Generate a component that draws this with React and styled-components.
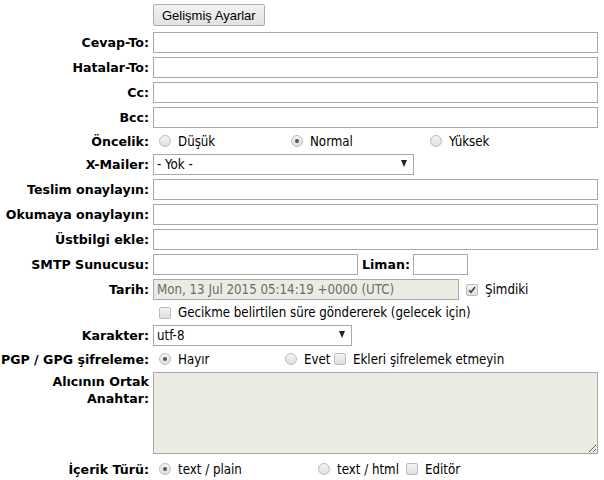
import styled, { createGlobalStyle } from "styled-components"

const Global = createGlobalStyle`
    html, body { margin: 0; padding: 0; background: #fff; }
    body {
        font-family: "DejaVu Sans Condensed", "DejaVu Sans", sans-serif;
        font-size: 13.2px;
        color: #000;
    }
`

const Form = styled.div`
    display: grid;
    grid-template-columns: 149px 445px;
    column-gap: 4px;
    row-gap: 4px;
    align-items: center;
    padding-top: 4px;
`

const Label = styled.div`
    text-align: right;
    font-family: "DejaVu Sans", sans-serif;
    font-size: 12.6px;
    font-weight: bold;
    line-height: 17px;
    white-space: nowrap;
    align-self: ${p => (p.$top ? "start" : "center")};
    padding-top: ${p => (p.$top ? "1px" : "0")};
`

const Cell = styled.div`
    display: flex;
    align-items: center;
    min-height: ${p => p.$h || 18}px;
`

const Button = styled.button`
    font-family: "Liberation Sans", Arial, sans-serif;
    font-size: 13px;
    height: 22px;
    padding: 0 8px;
    border: 1px solid #acacac;
    border-radius: 2px;
    background: linear-gradient(#f2f2f2, #e2e2e2);
    color: #000;
    margin-bottom: 2px;
`

const Text = styled.input`
    box-sizing: border-box;
    height: 21px;
    width: ${p => p.$w || "100%"};
    border: 1px solid #a9a9a9;
    padding: 1px 3px;
    font-family: inherit;
    font-size: 13.2px;
    background: ${p => (p.disabled ? "#ebebe4" : "#fff")};
    color: ${p => (p.disabled ? "#6d6d6d" : "#000")};
    margin: 0;
    outline: none;
`

const SelectBox = styled.div`
    position: relative;
    box-sizing: border-box;
    width: ${p => p.$w}px;
    height: 21px;
    border: 1px solid #a9a9a9;
    display: flex;
    align-items: center;
    padding-left: 3px;
    background: #fff;
`

const Arrow = styled.span`
    position: absolute;
    right: 6px;
    top: 5px;
    width: 0;
    height: 0;
    border-left: 3.5px solid transparent;
    border-right: 3.5px solid transparent;
    border-top: 7px solid #222;
`

const Radio = styled.span`
    box-sizing: border-box;
    display: inline-block;
    flex: none;
    width: 12px;
    height: 12px;
    border-radius: 50%;
    border: 1px solid #bcbcbc;
    background: linear-gradient(#f4f4f4, #dedede);
    margin: 0 7px 0 6px;
    position: relative;
    &::after {
        content: "";
        display: ${p => (p.$on ? "block" : "none")};
        position: absolute;
        left: 3px;
        top: 3px;
        width: 4px;
        height: 4px;
        border-radius: 50%;
        background: #555;
    }
`

const Check = styled.span`
    box-sizing: border-box;
    flex: none;
    width: 12px;
    height: 12px;
    border-radius: 2px;
    border: 1px solid #bcbcbc;
    background: linear-gradient(#f4f4f4, #dedede);
    margin: 0 7px 0 ${p => p.$ml ?? 6}px;
    display: flex;
    align-items: center;
    justify-content: center;
`

const Options = styled.div`
    display: grid;
    grid-template-columns: ${p => p.$cols};
    align-items: center;
    width: 100%;
    min-height: ${p => p.$h || 18}px;
`

const Opt = styled.label`
    display: flex;
    align-items: center;
    white-space: nowrap;
`

const InlineLabel = styled.span`
    font-family: "DejaVu Sans", sans-serif;
    font-size: 12.6px;
    font-weight: bold;
    margin: 0 3px 0 4px;
`

const Area = styled.textarea`
    box-sizing: border-box;
    width: 446px;
    height: 82px;
    border: 1px solid #a9a9a9;
    background: #ebebe4;
    margin: 0;
    display: block;
`

function Tick() {
    return <svg width="8" height="8" viewBox="0 0 8 8">
        <path d="M1 4.2 L3 6.3 L7 1" fill="none" stroke="#444" strokeWidth="1.6" />
    </svg>
}

const textRows = ["Cevap-To:", "Hatalar-To:", "Cc:", "Bcc:"]

function App() {
    return <>
        <Global />
        <Form>
            <div />
            <Cell $h={22}><Button>Gelişmiş Ayarlar</Button></Cell>

            {textRows.map(l => [
                <Label key={l + "l"}>{l}</Label>,
                <Cell key={l + "c"} $h={21}><Text /></Cell>,
            ])}

            <Label>Öncelik:</Label>
            <Options $cols="132px 139px 1fr">
                <Opt><Radio />Düşük</Opt>
                <Opt><Radio $on />Normal</Opt>
                <Opt><Radio />Yüksek</Opt>
            </Options>

            <Label>X-Mailer:</Label>
            <Cell $h={21}><SelectBox $w={261}>- Yok -<Arrow /></SelectBox></Cell>

            <Label>Teslim onaylayın:</Label>
            <Cell $h={21}><Text /></Cell>
            <Label>Okumaya onaylayın:</Label>
            <Cell $h={21}><Text /></Cell>
            <Label>Üstbilgi ekle:</Label>
            <Cell $h={21}><Text /></Cell>

            <Label>SMTP Sunucusu:</Label>
            <Cell $h={21}>
                <Text $w="205px" />
                <InlineLabel>Liman:</InlineLabel>
                <Text $w="55px" />
            </Cell>

            <Label>Tarih:</Label>
            <Cell $h={21}>
                <Text $w="306px" disabled value="Mon, 13 Jul 2015 05:14:19 +0000 (UTC)" readOnly />
                <Check $ml={7}><Tick /></Check>Şimdiki
            </Cell>

            <div />
            <Cell $h={17}><Check />Gecikme belirtilen süre göndererek (gelecek için)</Cell>

            <Label>Karakter:</Label>
            <Cell $h={21}><SelectBox $w={199}>utf-8<Arrow /></SelectBox></Cell>

            <Label>PGP / GPG şifreleme:</Label>
            <Options $cols="126px 55px 1fr">
                <Opt><Radio $on />Hayır</Opt>
                <Opt><Radio />Evet</Opt>
                <Opt><Check $ml={0} />Ekleri şifrelemek etmeyin</Opt>
            </Options>

            <Label $top>Alıcının Ortak<br />Anahtar:</Label>
            <Cell $h={82}><Area disabled /></Cell>

            <Label>İçerik Türü:</Label>
            <Options $cols="159px 94px 1fr" $h={22}>
                <Opt><Radio $on />text / plain</Opt>
                <Opt><Radio />text / html</Opt>
                <Opt><Check $ml={0} />Editör</Opt>
            </Options>
        </Form>
    </>
}

export default App
